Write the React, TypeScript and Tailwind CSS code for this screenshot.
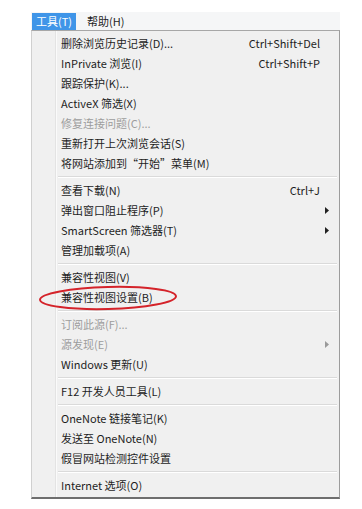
import React from "react";

type Item =
  | { sep: true }
  | { sep?: false; label: string; shortcut?: string; sub?: boolean; disabled?: boolean };

const items: Item[] = [
  { label: "删除浏览历史记录(D)...", shortcut: "Ctrl+Shift+Del" },
  { label: "InPrivate 浏览(I)", shortcut: "Ctrl+Shift+P" },
  { label: "跟踪保护(K)..." },
  { label: "ActiveX 筛选(X)" },
  { label: "修复连接问题(C)...", disabled: true },
  { label: "重新打开上次浏览会话(S)" },
  { label: "将网站添加到“开始”菜单(M)" },
  { sep: true },
  { label: "查看下载(N)", shortcut: "Ctrl+J" },
  { label: "弹出窗口阻止程序(P)", sub: true },
  { label: "SmartScreen 筛选器(T)", sub: true },
  { label: "管理加载项(A)" },
  { sep: true },
  { label: "兼容性视图(V)" },
  { label: "兼容性视图设置(B)" },
  { sep: true },
  { label: "订阅此源(F)...", disabled: true },
  { label: "源发现(E)", disabled: true, sub: true },
  { label: "Windows 更新(U)" },
  { sep: true },
  { label: "F12 开发人员工具(L)" },
  { sep: true },
  { label: "OneNote 链接笔记(K)" },
  { label: "发送至 OneNote(N)" },
  { label: "假冒网站检测控件设置" },
  { sep: true },
  { label: "Internet 选项(O)" },
];

function Arrow({ disabled }: { disabled?: boolean }) {
  return (
    <svg width="4" height="7" viewBox="0 0 4 7" className="ml-[5px]">
      <path d="M0 0 L4 3.5 L0 7 Z" fill={disabled ? "#9a9a9a" : "#222"} />
    </svg>
  );
}

export default function App() {
  return (
    <div
      className="relative w-[362px] h-[509px] bg-white pt-[12px] pl-[31px] text-[11px] text-[#1e1e1e]"
      style={{ fontFamily: '"Noto Sans CJK SC", "Noto Sans", sans-serif' }}
    >
      <div className="w-[309px]">
        {/* menu bar */}
        <div className="flex items-center h-[18px] bg-[#f5f6f7]">
          <div className="ml-[1px] w-[44px] h-[17px] flex items-center justify-center bg-[#3f95e8] text-white">
            工具(T)
          </div>
          <div className="ml-[11px]">帮助(H)</div>
        </div>

        {/* drop down */}
        <div className="relative bg-[#f0f0f0] border-t border-t-[#a7a7a7] border-r border-r-[#9c9c9c] border-l border-l-[#d0d0d0] border-b-2 border-b-[#6e6e6e] pt-[2px] pb-[2px]">
          <div className="absolute left-[23px] top-0 bottom-0 w-px bg-[#e3e3e3]" />
          <div className="absolute left-[24px] top-0 bottom-0 w-px bg-[#fafafa]" />
          {items.map((it, i) =>
            it.sep ? (
              <div key={i} className="relative h-[7px] flex flex-col justify-center ml-[26px] mr-[2px]">
                <div className="h-px bg-[#dadada]" />
                <div className="h-px bg-white" />
              </div>
            ) : (
              <div
                key={i}
                className={`relative flex items-center h-[20px] pl-[29px] ${it.disabled ? "text-[#9d9d9d]" : ""}`}
              >
                <span className="flex-1 whitespace-nowrap">{it.label}</span>
                {it.shortcut && <span className="whitespace-nowrap">{it.shortcut}</span>}
                <div className="w-[19px] flex items-center">
                  {it.sub && <Arrow disabled={it.disabled} />}
                </div>
              </div>
            )
          )}
        </div>
      </div>

      {/* red hand-drawn ellipse around 兼容性视图设置 */}
      <svg className="absolute left-[36px] top-[284px]" width="144" height="28" viewBox="0 0 144 28">
        <ellipse
          cx="72"
          cy="14"
          rx="68"
          ry="11"
          fill="none"
          stroke="#d4232a"
          strokeWidth="2"
          transform="rotate(-1.5 72 14)"
        />
      </svg>
    </div>
  );
}
